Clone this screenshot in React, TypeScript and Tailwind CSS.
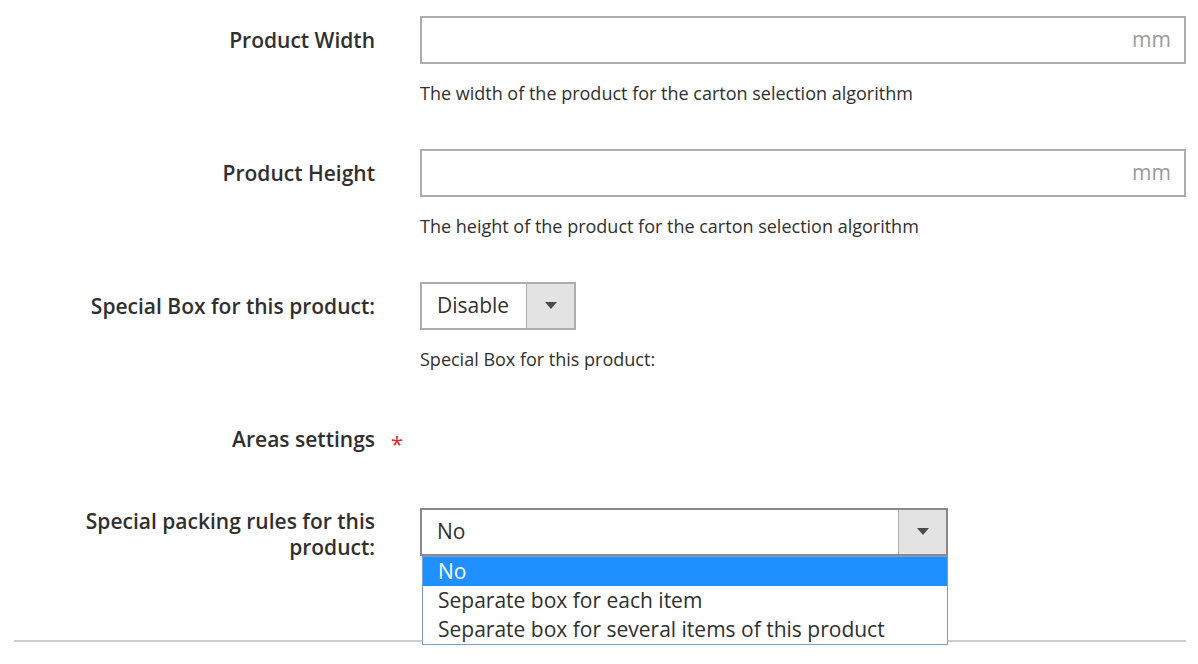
import React from 'react';

const font = { fontFamily: '"Open Sans", "Liberation Sans", sans-serif' };

const Caret = () => (
  <svg width="12" height="8" viewBox="0 0 12 8" className="block">
    <path d="M0 0 H12 L6 7 Z" fill="#514943" />
  </svg>
);

const Label = ({ children, required }: { children: React.ReactNode; required?: boolean }) => (
  <div className="text-right text-[21px] font-semibold leading-[48px] text-[#303030]">
    <span className="relative">
      {children}
      {required && (
        <span className="absolute left-[calc(100%+16px)] top-[-6px] text-[22px] font-normal text-[#e22626]">*</span>
      )}
    </span>
  </div>
);

const Help = ({ children }: { children: React.ReactNode }) => (
  <div className="mt-[17px] text-[18px] leading-[24px] text-[#303030]">{children}</div>
);

const UnitInput = () => (
  <div className="flex h-12 w-full items-center justify-end border-2 border-[#adadad] bg-white pr-[13px]">
    <span className="text-[21px] text-[#9a9a9a]">mm</span>
  </div>
);

const SelectBox = ({ value, width, open }: { value: string; width: string; open?: boolean }) => (
  <div className={`flex h-12 items-stretch border-2 bg-white ${width} ${open ? 'border-[#8a8a8a]' : 'border-[#adadad]'}`}>
    <div className="flex flex-1 items-center pl-[15px] text-[21px] text-[#303030]">{value}</div>
    <div className="flex w-12 items-center justify-center border-l border-[#adadad] bg-[#e3e3e3]">
      <Caret />
    </div>
  </div>
);

export default function App() {
  const options = ['No', 'Separate box for each item', 'Separate box for several items of this product'];

  return (
    <div className="h-[664px] w-[1198px] overflow-hidden bg-white" style={font}>
      <div className="pt-4">
        <div className="grid grid-cols-[375px_766px] gap-x-[45px]">
          {/* Product Width */}
          <Label>Product Width</Label>
          <div className="mb-[44px]">
            <UnitInput />
            <Help>The width of the product for the carton selection algorithm</Help>
          </div>

          {/* Product Height */}
          <Label>Product Height</Label>
          <div className="mb-[44px]">
            <UnitInput />
            <Help>The height of the product for the carton selection algorithm</Help>
          </div>

          {/* Special box */}
          <Label>Special Box for this product:</Label>
          <div className="mb-[44px]">
            <SelectBox value="Disable" width="w-[156px]" />
            <Help>Special Box for this product:</Help>
          </div>

          {/* Areas */}
          <Label required>Areas settings</Label>
          <div className="mb-[45px] h-12" />

          {/* Packing rules */}
          <div className="text-right text-[21px] font-semibold leading-[26px] text-[#303030]">
            Special packing rules for this
            <br />
            product:
          </div>
          <div className="relative h-[92px]">
            <SelectBox value="No" width="w-[528px]" open />
            <div className="absolute left-[2px] top-12 z-10 w-[526px] border border-[#7a9cd3] bg-white">
              {options.map((o, i) => (
                <div
                  key={o}
                  className={`h-[29px] pl-[15px] text-[21px] leading-[28px] ${
                    i === 0 ? 'bg-[#1e90ff] text-white' : 'text-[#303030]'
                  }`}
                >
                  {o}
                </div>
              ))}
            </div>
          </div>
        </div>
        <div className="ml-[14px] mt-[40px] h-[2px] w-[1172px] bg-[#cccccc]" />
      </div>
    </div>
  );
}
